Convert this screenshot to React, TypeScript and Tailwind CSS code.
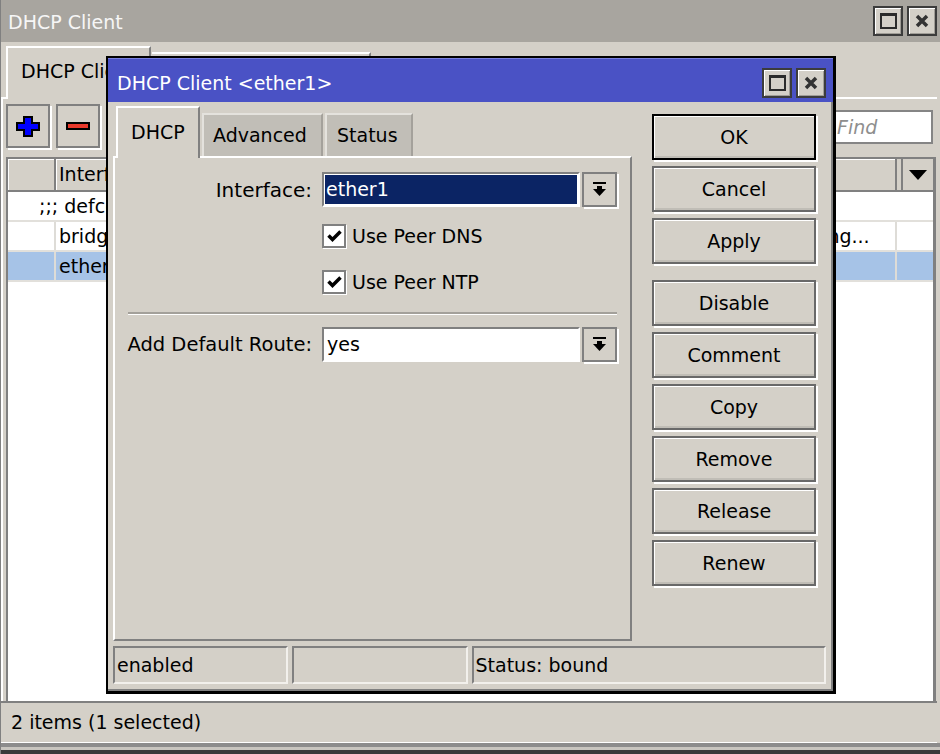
import React from "react"

const sunken = "border-2 border-t-[#808080] border-l-[#808080] border-b-white border-r-white"

function WinButton({ kind }: { kind: "max" | "close" }) {
  return (
    <div className="w-[30px] h-[30px] bg-[#d4d0c8] border-2 border-[#3c3c3c] shadow-[inset_1px_1px_0_#fff,inset_-1px_-1px_0_#a09d97] flex items-center justify-center">
      {kind === "max" ? (
        <svg width="17" height="16" viewBox="0 0 17 16">
          <path d="M0 0h17v16H0z M2 3v11h13V3z" fill="#2b2b2b" fillRule="evenodd" />
        </svg>
      ) : (
        <svg width="14" height="14" viewBox="0 0 14 14">
          <path d="M2 2l10 10M12 2L2 12" stroke="#333" strokeWidth="3.5" />
        </svg>
      )}
    </div>
  )
}

function DropButton() {
  return (
    <div className="w-[35px] h-[35px] border-2 border-[#808080] shadow-[2px_2px_0_#fff] bg-[#d4d0c8] flex items-center justify-center">
      <svg width="13" height="15" viewBox="0 0 13 15">
        <rect x="0" y="0" width="13" height="2" fill="#000" />
        <rect x="4" y="4" width="5" height="3" fill="#000" />
        <path d="M0 7h13l-6.5 7z" fill="#000" />
      </svg>
    </div>
  )
}

function CheckBox() {
  return (
    <div className="w-[24px] h-[24px] border-2 border-[#808080] bg-white shadow-[1px_1px_0_#fff] flex items-center justify-center">
      <svg width="15" height="12" viewBox="0 0 15 12">
        <path d="M1.5 5.5l4 4 8-8" stroke="#000" strokeWidth="3.5" fill="none" />
      </svg>
    </div>
  )
}

function DlgButton({ label, def }: { label: string; def?: boolean }) {
  return (
    <div
      className={`h-[46px] w-[164px] flex items-center justify-center bg-[#d4d0c8] border-2 shadow-[inset_1px_1px_0_#fff,inset_0_-2px_0_#c0bdb6,2px_2px_0_#fff] ${
        def ? "border-black" : "border-[#696969]"
      }`}
    >
      {label}
    </div>
  )
}

// column widths of the list behind the dialog; only the first header is visible
const colWidths = ["w-[110px]", "w-[150px]", "w-[170px]", "w-[120px]"]

const rows = [
  { iface: "bridge", status: "searching...", selected: false },
  { iface: "ether1", status: "bound", selected: true },
]

function DhcpDialog() {
  return (
    <div className="absolute z-20 left-[105px] top-[56px] w-[730px] h-[638px] bg-[#d4d0c8] border-l-2 border-t-2 border-r-[3px] border-b-[3px] border-black flex flex-col">
      <div className="h-[44px] bg-[#4a52c5] border-t border-[#7a80dd] flex items-center pl-[9px] pr-[7px]">
        <span className="text-white pt-[6px]">DHCP Client &lt;ether1&gt;</span>
        <div className="ml-auto flex gap-[4px] pt-[4px]">
          <WinButton kind="max" />
          <WinButton kind="close" />
        </div>
      </div>

      <div className="flex-1 border-r-2 border-b-2 border-[#808080] pt-[4px] px-[5px] flex flex-col">
        <div className="flex">
          <div className="w-[519px] flex flex-col">
            <div className="h-[50px] flex items-end pl-[3px]">
              <div className="relative z-10 -mb-[2px] w-[84px] h-[52px] bg-[#d4d0c8] border-t-2 border-l-2 border-white border-r-2 border-r-[#808080] flex items-center pl-[13px] pb-[2px]">
                DHCP
              </div>
              <div className="ml-[2px] w-[121px] h-[43px] bg-[#c1beb7] border-t-2 border-l-2 border-[#e4e2dd] border-r-2 border-r-[#a4a19b] flex items-center pl-[9px]">
                Advanced
              </div>
              <div className="ml-[2px] w-[88px] h-[43px] bg-[#c1beb7] border-t-2 border-l-2 border-[#e4e2dd] border-r-2 border-r-[#a4a19b] flex items-center pl-[10px]">
                Status
              </div>
            </div>

            <div className="h-[485px] border-2 border-t-white border-l-white border-r-[#808080] border-b-[#808080] flex flex-col">
              <div className="mt-[14px] flex items-center h-[35px]">
                <div className="w-[197px] text-right text-[20px]">Interface:</div>
                <div className={`ml-[10px] w-[258px] h-[35px] ${sunken} bg-white p-[1px]`}>
                  <div className="h-full bg-[#0b2464] text-white flex items-center pl-[1px]">ether1</div>
                </div>
                <div className="ml-[2px]">
                  <DropButton />
                </div>
              </div>

              <div className="mt-[17px] ml-[207px] flex items-center gap-[6px] h-[24px]">
                <CheckBox />
                <span>Use Peer DNS</span>
              </div>
              <div className="mt-[22px] ml-[207px] flex items-center gap-[6px] h-[24px]">
                <CheckBox />
                <span>Use Peer NTP</span>
              </div>

              <div className="mt-[18px] ml-[13px] w-[489px] h-[3px] border-t-2 border-[#a3a09a] border-b border-b-white" />

              <div className="mt-[12px] flex items-center h-[35px]">
                <div className="w-[197px] text-right text-[19.5px] whitespace-nowrap">Add Default Route:</div>
                <div className={`ml-[10px] w-[258px] h-[35px] ${sunken} bg-white flex items-center pl-[3px]`}>
                  yes
                </div>
                <div className="ml-[2px]">
                  <DropButton />
                </div>
              </div>
            </div>
          </div>

          <div className="ml-[20px] mt-[8px] flex flex-col gap-[6px]">
            <DlgButton label="OK" def />
            <DlgButton label="Cancel" />
            <DlgButton label="Apply" />
            <div className="mt-[10px] flex flex-col gap-[6px]">
              <DlgButton label="Disable" />
              <DlgButton label="Comment" />
              <DlgButton label="Copy" />
              <DlgButton label="Remove" />
              <DlgButton label="Release" />
              <DlgButton label="Renew" />
            </div>
          </div>
        </div>

        <div className="mt-[5px] flex gap-[4px] h-[38px]">
          <div className="w-[175px] border-2 border-t-[#808080] border-l-[#808080] border-b-[#f2f0ec] border-r-[#f2f0ec] flex items-center pl-[2px]">
            enabled
          </div>
          <div className="w-[176px] border-2 border-t-[#808080] border-l-[#808080] border-b-[#f2f0ec] border-r-[#f2f0ec]" />
          <div className="w-[355px] border-2 border-t-[#808080] border-l-[#808080] border-b-[#f2f0ec] border-r-[#f2f0ec] flex items-center pl-[2px]">
            Status: bound
          </div>
        </div>
      </div>
    </div>
  )
}

export default function App() {
  return (
    <div className="relative w-[940px] h-[754px] overflow-hidden bg-[#d4d0c8] border-l border-[#808080] font-['DejaVu_Sans',sans-serif] text-[19px] leading-none text-black flex flex-col">
      <div className="h-[42px] shrink-0 bg-[#a8a59f] flex items-center pl-[7px] pr-[3px]">
        <span className="text-[#f6f6f6] pt-[2px]">DHCP Client</span>
        <div className="ml-auto flex gap-[4px]">
          <WinButton kind="max" />
          <WinButton kind="close" />
        </div>
      </div>

      <div className="h-[55px] shrink-0 flex items-end pl-[5px]">
        <div className="relative z-10 -mb-[2px] w-[145px] h-[53px] bg-[#d4d0c8] border-t-2 border-l-2 border-white border-r-2 border-r-[#808080] flex items-center pl-[13px] pb-[4px] overflow-hidden whitespace-nowrap">
          DHCP Client
        </div>
        <div className="w-[219px] h-[45px] ml-[1px] bg-[#d4d0c8] border-t-2 border-white border-r-2 border-r-[#808080]" />
      </div>

      <div className="flex-1 mr-[3px] border-t-2 border-l-2 border-white flex flex-col">
        <div className="h-[58px] shrink-0 flex items-start pt-[5px] pl-[3px]">
          <div className="w-[44px] h-[44px] border-2 border-[#808080] shadow-[2px_2px_0_#fff] flex items-center justify-center">
            <svg width="24" height="21" viewBox="0 0 24 21">
              <path d="M8 1h8v6h7v7h-7v6H8v-6H1V7h7z" fill="#0000ff" stroke="#000" strokeWidth="2" />
            </svg>
          </div>
          <div className="ml-[6px] w-[44px] h-[44px] border-2 border-[#808080] shadow-[2px_2px_0_#fff] flex items-center justify-center">
            <svg width="24" height="8" viewBox="0 0 24 8">
              <rect x="1" y="1" width="22" height="6" fill="#e8392b" stroke="#000" strokeWidth="2" />
            </svg>
          </div>
          <div className="ml-auto mr-[4px] mt-[6px] w-[104px] h-[34px] bg-white border-2 border-[#858585] flex items-center pl-[6px] italic text-[#8e8e8e]">
            Find
          </div>
        </div>

        <div className="flex-1 ml-[3px] mr-[1px] border-l-2 border-t-2 border-r-[3px] border-[#808080] bg-white flex flex-col">
          <div className="h-[33px] shrink-0 bg-[#d4d0c8] border-b-2 border-[#808080] flex">
            <div className="w-[48px] border-r-2 border-[#808080] shadow-[inset_1px_1px_0_#fff]" />
            <div className="w-[150px] shrink-0 border-r-2 border-[#808080] shadow-[inset_1px_1px_0_#fff] flex items-center pl-[3px] overflow-hidden whitespace-nowrap">
              Interface
            </div>
            {colWidths.map((w) => (
              <div key={w} className={`${w} shrink-0 border-r-2 border-[#808080] shadow-[inset_1px_1px_0_#fff]`} />
            ))}
            <div className="w-[141px] shrink-0 border-r-2 border-[#808080] shadow-[inset_1px_1px_0_#fff]" />
            <div className="flex-1 pl-[4px] flex">
              <div className="flex-1 border-l-2 border-[#808080] flex items-center justify-center">
                <svg width="18" height="10" viewBox="0 0 18 10">
                  <path d="M0 0h18L9 10z" fill="#000" />
                </svg>
              </div>
            </div>
          </div>

          <div className="h-[30px] shrink-0 border-b-2 border-[#e2e0db] flex items-center pl-[31px]">
            ;;; defconf
          </div>
          {rows.map((r) => (
            <div
              key={r.iface}
              className={`h-[30px] shrink-0 border-b-2 border-[#e2e0db] flex ${r.selected ? "bg-[#a6c3e7]" : "bg-white"}`}
            >
              <div className="w-[48px] border-r-2 border-[#dedcd7]" />
              <div className="w-[150px] flex items-center pl-[3px]">{r.iface}</div>
              <div className="w-[550px]" />
              <div className="w-[141px] border-r-2 border-[#dedcd7] flex items-center pl-[3px] whitespace-nowrap">
                {r.status}
              </div>
              <div className="flex-1" />
            </div>
          ))}
        </div>
      </div>

      <div className="h-[42px] shrink-0 mr-[3px] border-t-2 border-[#808080] border-b border-b-white flex items-center pl-[10px]">
        2 items (1 selected)
      </div>
      <div className="h-[11px] shrink-0 border-t-[4px] border-[#8c8c8c] border-b-[4px] border-b-[#3a3a3a] bg-[#c8c5bf]" />

      <DhcpDialog />
    </div>
  )
}
